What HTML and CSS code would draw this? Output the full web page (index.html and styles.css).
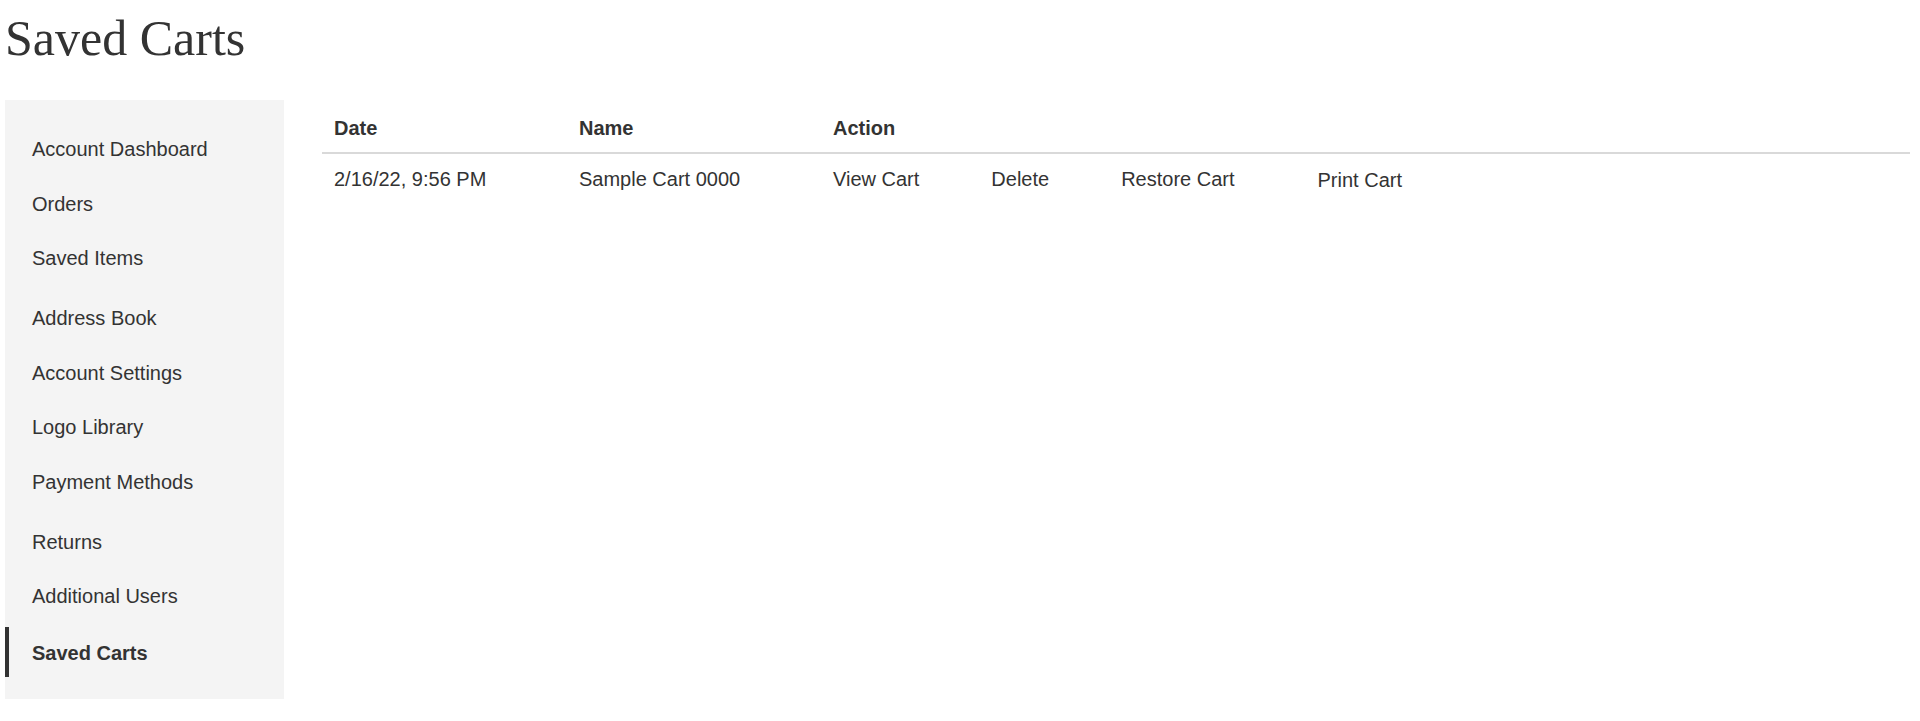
FILE: index.html
```html
<!DOCTYPE html>
<html lang="en">
<head>
    <meta charset="UTF-8">
    <meta name="viewport" content="width=device-width, initial-scale=1.0">
    <title>Saved Carts</title>
    <link rel="stylesheet" href="styles.css">
</head>
<body>
    <div class="page">
        <h1 class="page-title">Saved Carts</h1>

        <div class="account">
            <nav class="account-nav">
                <ul class="nav-group">
                    <li><a href="#">Account Dashboard</a></li>
                    <li><a href="#">Orders</a></li>
                    <li><a href="#">Saved Items</a></li>
                </ul>
                <ul class="nav-group">
                    <li><a href="#">Address Book</a></li>
                    <li><a href="#">Account Settings</a></li>
                    <li><a href="#">Logo Library</a></li>
                    <li><a href="#">Payment Methods</a></li>
                </ul>
                <ul class="nav-group">
                    <li><a href="#">Returns</a></li>
                    <li><a href="#">Additional Users</a></li>
                    <li class="active"><a href="#">Saved Carts</a></li>
                </ul>
            </nav>

            <main class="account-content">
                <table class="carts">
                    <thead>
                        <tr>
                            <th class="col-date">Date</th>
                            <th class="col-name">Name</th>
                            <th>Action</th>
                        </tr>
                    </thead>
                    <tbody>
                        <tr>
                            <td>2/16/22, 9:56 PM</td>
                            <td>Sample Cart 0000</td>
                            <td>
                                <div class="actions">
                                    <a href="#">View Cart</a>
                                    <a href="#">Delete</a>
                                    <a href="#">Restore Cart</a>
                                    <button class="print" type="button">Print Cart</button>
                                </div>
                            </td>
                        </tr>
                    </tbody>
                </table>
            </main>
        </div>
    </div>
</body>
</html>
```

FILE: styles.css
```css
* {
    margin: 0;
    padding: 0;
    box-sizing: border-box;
}

body {
    font-family: "Liberation Sans", Arial, Helvetica, sans-serif;
    color: #333;
    background: #fff;
}

.page {
    padding: 8px 10px 0 5px;
}

/* Page heading */
.page-title {
    font-family: "Liberation Serif", "Times New Roman", serif;
    font-weight: 400;
    font-size: 50px;
    line-height: 60px;
    margin-bottom: 32px;
}

.account {
    display: flex;
    align-items: flex-start;
    gap: 38px;
}

/* Sidebar menu */
.account-nav {
    width: 279px;
    flex-shrink: 0;
    background: #f4f4f4;
    padding: 22px 0;
}

.nav-group {
    list-style: none;
}

.nav-group + .nav-group {
    margin-top: 5px;
}

.nav-group a {
    display: block;
    padding: 15px 27px;
    font-size: 20px;
    line-height: 1.2335;
    color: #333;
    text-decoration: none;
}

.nav-group .active a {
    margin-top: 3px;
    padding: 14px 23px 11px;
    border-left: 4px solid #333;
    font-weight: 700;
}

/* Carts table */
.account-content {
    flex: 1;
}

.carts {
    width: 100%;
    border-collapse: collapse;
    font-size: 20px;
}

.carts th {
    text-align: left;
    font-weight: 700;
    line-height: 23px;
    padding: 17px 12px 12px;
    border-bottom: 2px solid #d9d9d9;
}

.carts th.col-date {
    width: 245px;
}

.carts th.col-name {
    width: 254px;
}

.carts td {
    line-height: 23px;
    padding: 14px 12px;
    vertical-align: top;
}

.actions {
    display: flex;
    gap: 72px;
}

.actions a {
    color: #333;
    text-decoration: none;
}

.actions .print {
    margin-left: 11px;
    padding-top: 1px;
    border: none;
    background: none;
    font: inherit;
    line-height: 23px;
    color: #333;
    cursor: pointer;
}
```
